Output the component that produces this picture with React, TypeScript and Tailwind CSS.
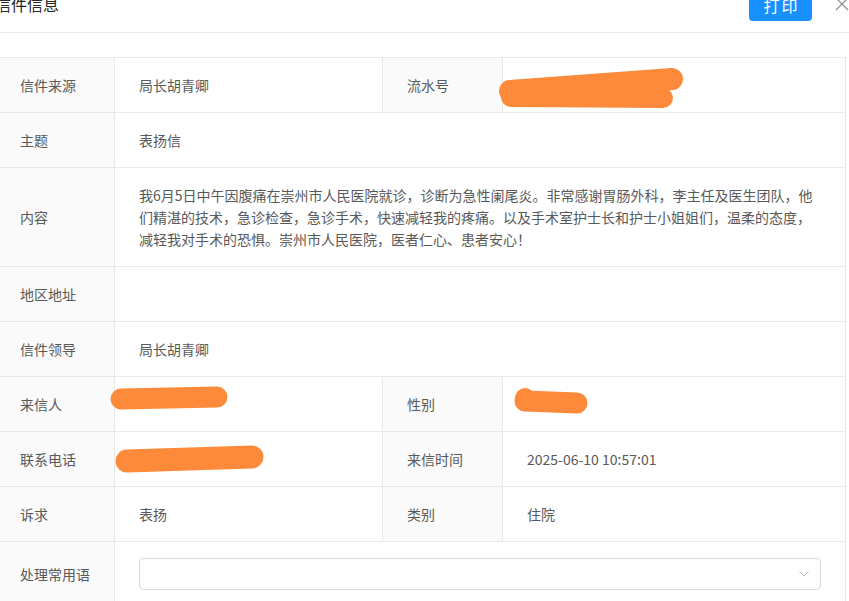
import React from 'react';

interface RowProps {
  label: string;
  children?: React.ReactNode;
}

const Label: React.FC<{ text: string }> = ({ text }) => (
  <div className="flex items-center bg-[#fafafa] px-6 py-4 leading-[22px] text-[#595959]">{text}</div>
);

const Value: React.FC<{ children?: React.ReactNode; wide?: boolean }> = ({ children, wide }) => (
  <div className={`bg-white px-6 py-4 leading-[22px] text-[#595959] ${wide ? 'col-span-3' : ''}`}>
    {children}
  </div>
);

const WideRow: React.FC<RowProps> = ({ label, children }) => (
  <>
    <Label text={label} />
    <Value wide>{children}</Value>
  </>
);

const App: React.FC = () => {
  return (
    <div className="relative w-[849px] h-[601px] overflow-hidden bg-white text-[14px] font-['Noto_Sans_CJK_SC','Microsoft_YaHei',sans-serif]">
      {/* Header */}
      <div className="flex items-start h-[33px] border-b border-[#e8e8e8]">
        <div className="-ml-[5px] -mt-[7px] text-[16px] leading-[22px] text-[#262626]">信件信息</div>
        <button className="ml-auto -mt-[11px] h-[32px] w-[63px] rounded bg-[#1890ff] text-white text-[16px] tracking-[2px] pl-[2px]">
          打印
        </button>
        <svg className="ml-[23px] -mt-[3px] shrink-0" width="14" height="14" viewBox="0 0 14 14">
          <path d="M1 1 L13 13 M13 1 L1 13" stroke="#8c8c8c" strokeWidth="1.2" fill="none" />
        </svg>
      </div>

      {/* Detail table */}
      <div className="pt-[24px]">
        <div className="-ml-[5px] w-max grid grid-cols-[118px_267px_119px_342px] gap-px bg-[#e8e8e8] border border-[#e8e8e8]">
          <Label text="信件来源" />
          <Value>局长胡青卿</Value>
          <Label text="流水号" />
          <Value />

          <WideRow label="主题">表扬信</WideRow>

          <Label text="内容" />
          <div className="col-span-3 bg-white px-6 py-4 leading-[22px] text-[#595959] whitespace-nowrap">
            <div>我6月5日中午因腹痛在崇州市人民医院就诊，诊断为急性阑尾炎。非常感谢胃肠外科，李主任及医生团队，他</div>
            <div>们精湛的技术，急诊检查，急诊手术，快速减轻我的疼痛。以及手术室护士长和护士小姐姐们，温柔的态度，</div>
            <div>减轻我对手术的恐惧。崇州市人民医院，医者仁心、患者安心！</div>
          </div>

          <WideRow label="地区地址" />
          <WideRow label="信件领导">局长胡青卿</WideRow>

          <Label text="来信人" />
          <Value />
          <Label text="性别" />
          <Value />

          <Label text="联系电话" />
          <Value />
          <Label text="来信时间" />
          <Value>2025-06-10 10:57:01</Value>

          <Label text="诉求" />
          <Value>表扬</Value>
          <Label text="类别" />
          <Value>住院</Value>

          <Label text="处理常用语" />
          <div className="col-span-3 bg-white px-6 py-4">
            <div className="h-[32px] w-[682px] rounded border border-[#d9d9d9] flex items-center justify-end pr-[11px]">
              <svg width="10" height="6" viewBox="0 0 10 6">
                <path d="M0.5 0.5 L5 5 L9.5 0.5" stroke="#bfbfbf" strokeWidth="1" fill="none" />
              </svg>
            </div>
          </div>
        </div>
      </div>

      {/* Redaction marks */}
      <svg className="absolute left-0 top-0 pointer-events-none" width="849" height="601" viewBox="0 0 849 601">
        <g stroke="#fd8a3a" strokeLinecap="round" fill="none">
          <path d="M510 91 L672 79" strokeWidth="22" />
          <path d="M511 97 L663 98" strokeWidth="20" />
          <path d="M121 399 L217 397" strokeWidth="21" />
          <path d="M127 461 L252 457" strokeWidth="23" />
          <path d="M525 401 L577 403" strokeWidth="21" />
          <circle cx="525" cy="398" r="10" fill="#fd8a3a" stroke="none" />
        </g>
      </svg>
    </div>
  );
};

export default App;
